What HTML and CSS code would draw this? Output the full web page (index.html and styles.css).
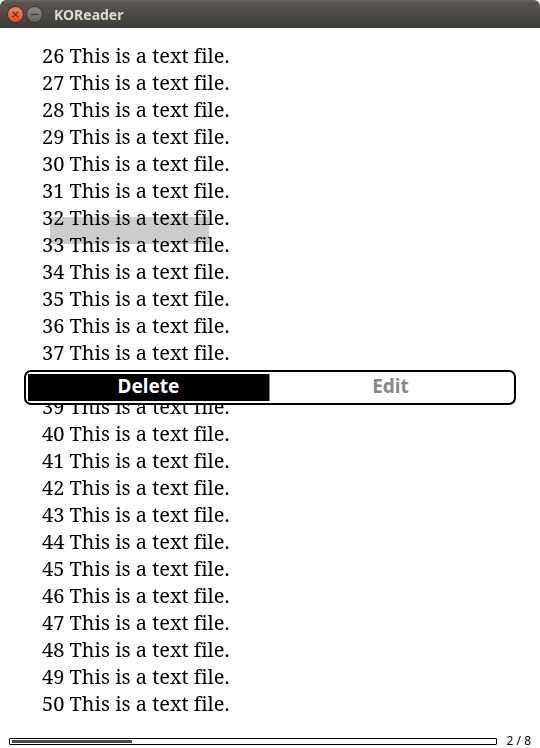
FILE: index.html
```html
<!DOCTYPE html>
<html lang="en">
<head>
<meta charset="utf-8">
<meta name="viewport" content="width=device-width, initial-scale=1">
<title>KOReader</title>
<link rel="stylesheet" href="styles.css">
</head>
<body>
<header class="titlebar">
  <button class="window-button close" type="button" aria-label="Close">
    <svg viewBox="0 0 16 16" aria-hidden="true"><path d="M5 5l6 6M11 5l-6 6"/></svg>
  </button>
  <button class="window-button minimize" type="button" aria-label="Minimize">
    <svg viewBox="0 0 16 16" aria-hidden="true"><path d="M4 8h8"/></svg>
  </button>
  <h1 class="title">KOReader</h1>
</header>
<main class="reader">
  <div class="page">
    <p>26 This is a text file.</p>
    <p>27 This is a text file.</p>
    <p>28 This is a text file.</p>
    <p>29 This is a text file.</p>
    <p>30 This is a text file.</p>
    <p>31 This is a text file.</p>
    <p>32 This is a text file.</p>
    <p>33 This is a text file.</p>
    <p>34 This is a text file.</p>
    <p>35 This is a text file.</p>
    <p>36 This is a text file.</p>
    <p>37 This is a text file.</p>
    <p>38 This is a text file.</p>
    <p>39 This is a text file.</p>
    <p>40 This is a text file.</p>
    <p>41 This is a text file.</p>
    <p>42 This is a text file.</p>
    <p>43 This is a text file.</p>
    <p>44 This is a text file.</p>
    <p>45 This is a text file.</p>
    <p>46 This is a text file.</p>
    <p>47 This is a text file.</p>
    <p>48 This is a text file.</p>
    <p>49 This is a text file.</p>
    <p>50 This is a text file.</p>
  </div>
  <div class="highlight"></div>
  <div class="dialog" role="dialog" aria-label="Highlight">
    <button class="action pressed" type="button">Delete</button>
    <button class="action muted" type="button">Edit</button>
  </div>
</main>
<footer class="status">
  <div class="track"><div class="fill" style="width: 25%"></div></div>
  <span>2 / 8</span>
</footer>
</body>
</html>
```
FILE: styles.css
```css
* {
  box-sizing: border-box;
}

html {
  background: #fff;
}

body {
  margin: 0;
  min-height: 100vh;
  display: flex;
  flex-direction: column;
  background: #fff;
  color: #000;
  font-family: "Noto Sans", sans-serif;
}

button {
  margin: 0;
  padding: 0;
  border: 0;
  font: inherit;
}

.titlebar {
  display: flex;
  align-items: center;
  gap: 2px;
  height: 28px;
  padding: 1px 7px 0;
  background: linear-gradient(#67645b, #59564e 3px, #3d3c37);
  border-radius: 6px 6px 0 0;
}

.window-button {
  width: 17px;
  height: 17px;
  border: 1px solid #33322e;
  border-radius: 50%;
}

.window-button svg {
  display: block;
  width: 100%;
  fill: none;
  stroke: #3b2f29;
  stroke-width: 1.2;
}

.close {
  background: linear-gradient(#f58263, #e0501f);
}

.minimize {
  background: linear-gradient(#8b8981, #65635b);
}

.title {
  margin: 0 0 0 9px;
  color: #dfdbd2;
  font: bold 14px/20px "Noto Sans", sans-serif;
}

.reader {
  position: relative;
  flex: 1;
}

.page {
  padding: 14px 42px 0;
  font: 20px/27px "Noto Serif", "Droid Serif", "Liberation Serif", serif;
  font-kerning: none;
  font-variant-ligatures: none;
}

.page p {
  margin: 0;
}

.highlight {
  position: absolute;
  top: 189px;
  left: 50px;
  width: 159px;
  height: 27px;
  background: #ccc;
  mix-blend-mode: multiply;
}

.dialog {
  position: absolute;
  top: 342px;
  left: 24px;
  right: 24px;
  display: flex;
  padding: 2px 3px 2px 2px;
  border: 2px solid #000;
  border-radius: 7px;
  background: #fff;
}

.action {
  flex: 1;
  height: 27px;
  padding-bottom: 2px;
  background: #fff;
  font: bold 19px/25px "Noto Sans", sans-serif;
}

.pressed {
  background: #000;
  border-right: 1px solid #888;
  color: #fff;
}

.muted {
  color: #888;
}

.status {
  display: flex;
  align-items: center;
  gap: 10px;
  padding: 0 9px;
  font-size: 12px;
  line-height: 14px;
}

.track {
  flex: 1;
  height: 7px;
  padding: 1px 2px;
  border: 1px solid #000;
  border-radius: 1px;
}

.fill {
  height: 3px;
  background: #4c4c4c;
}
```
